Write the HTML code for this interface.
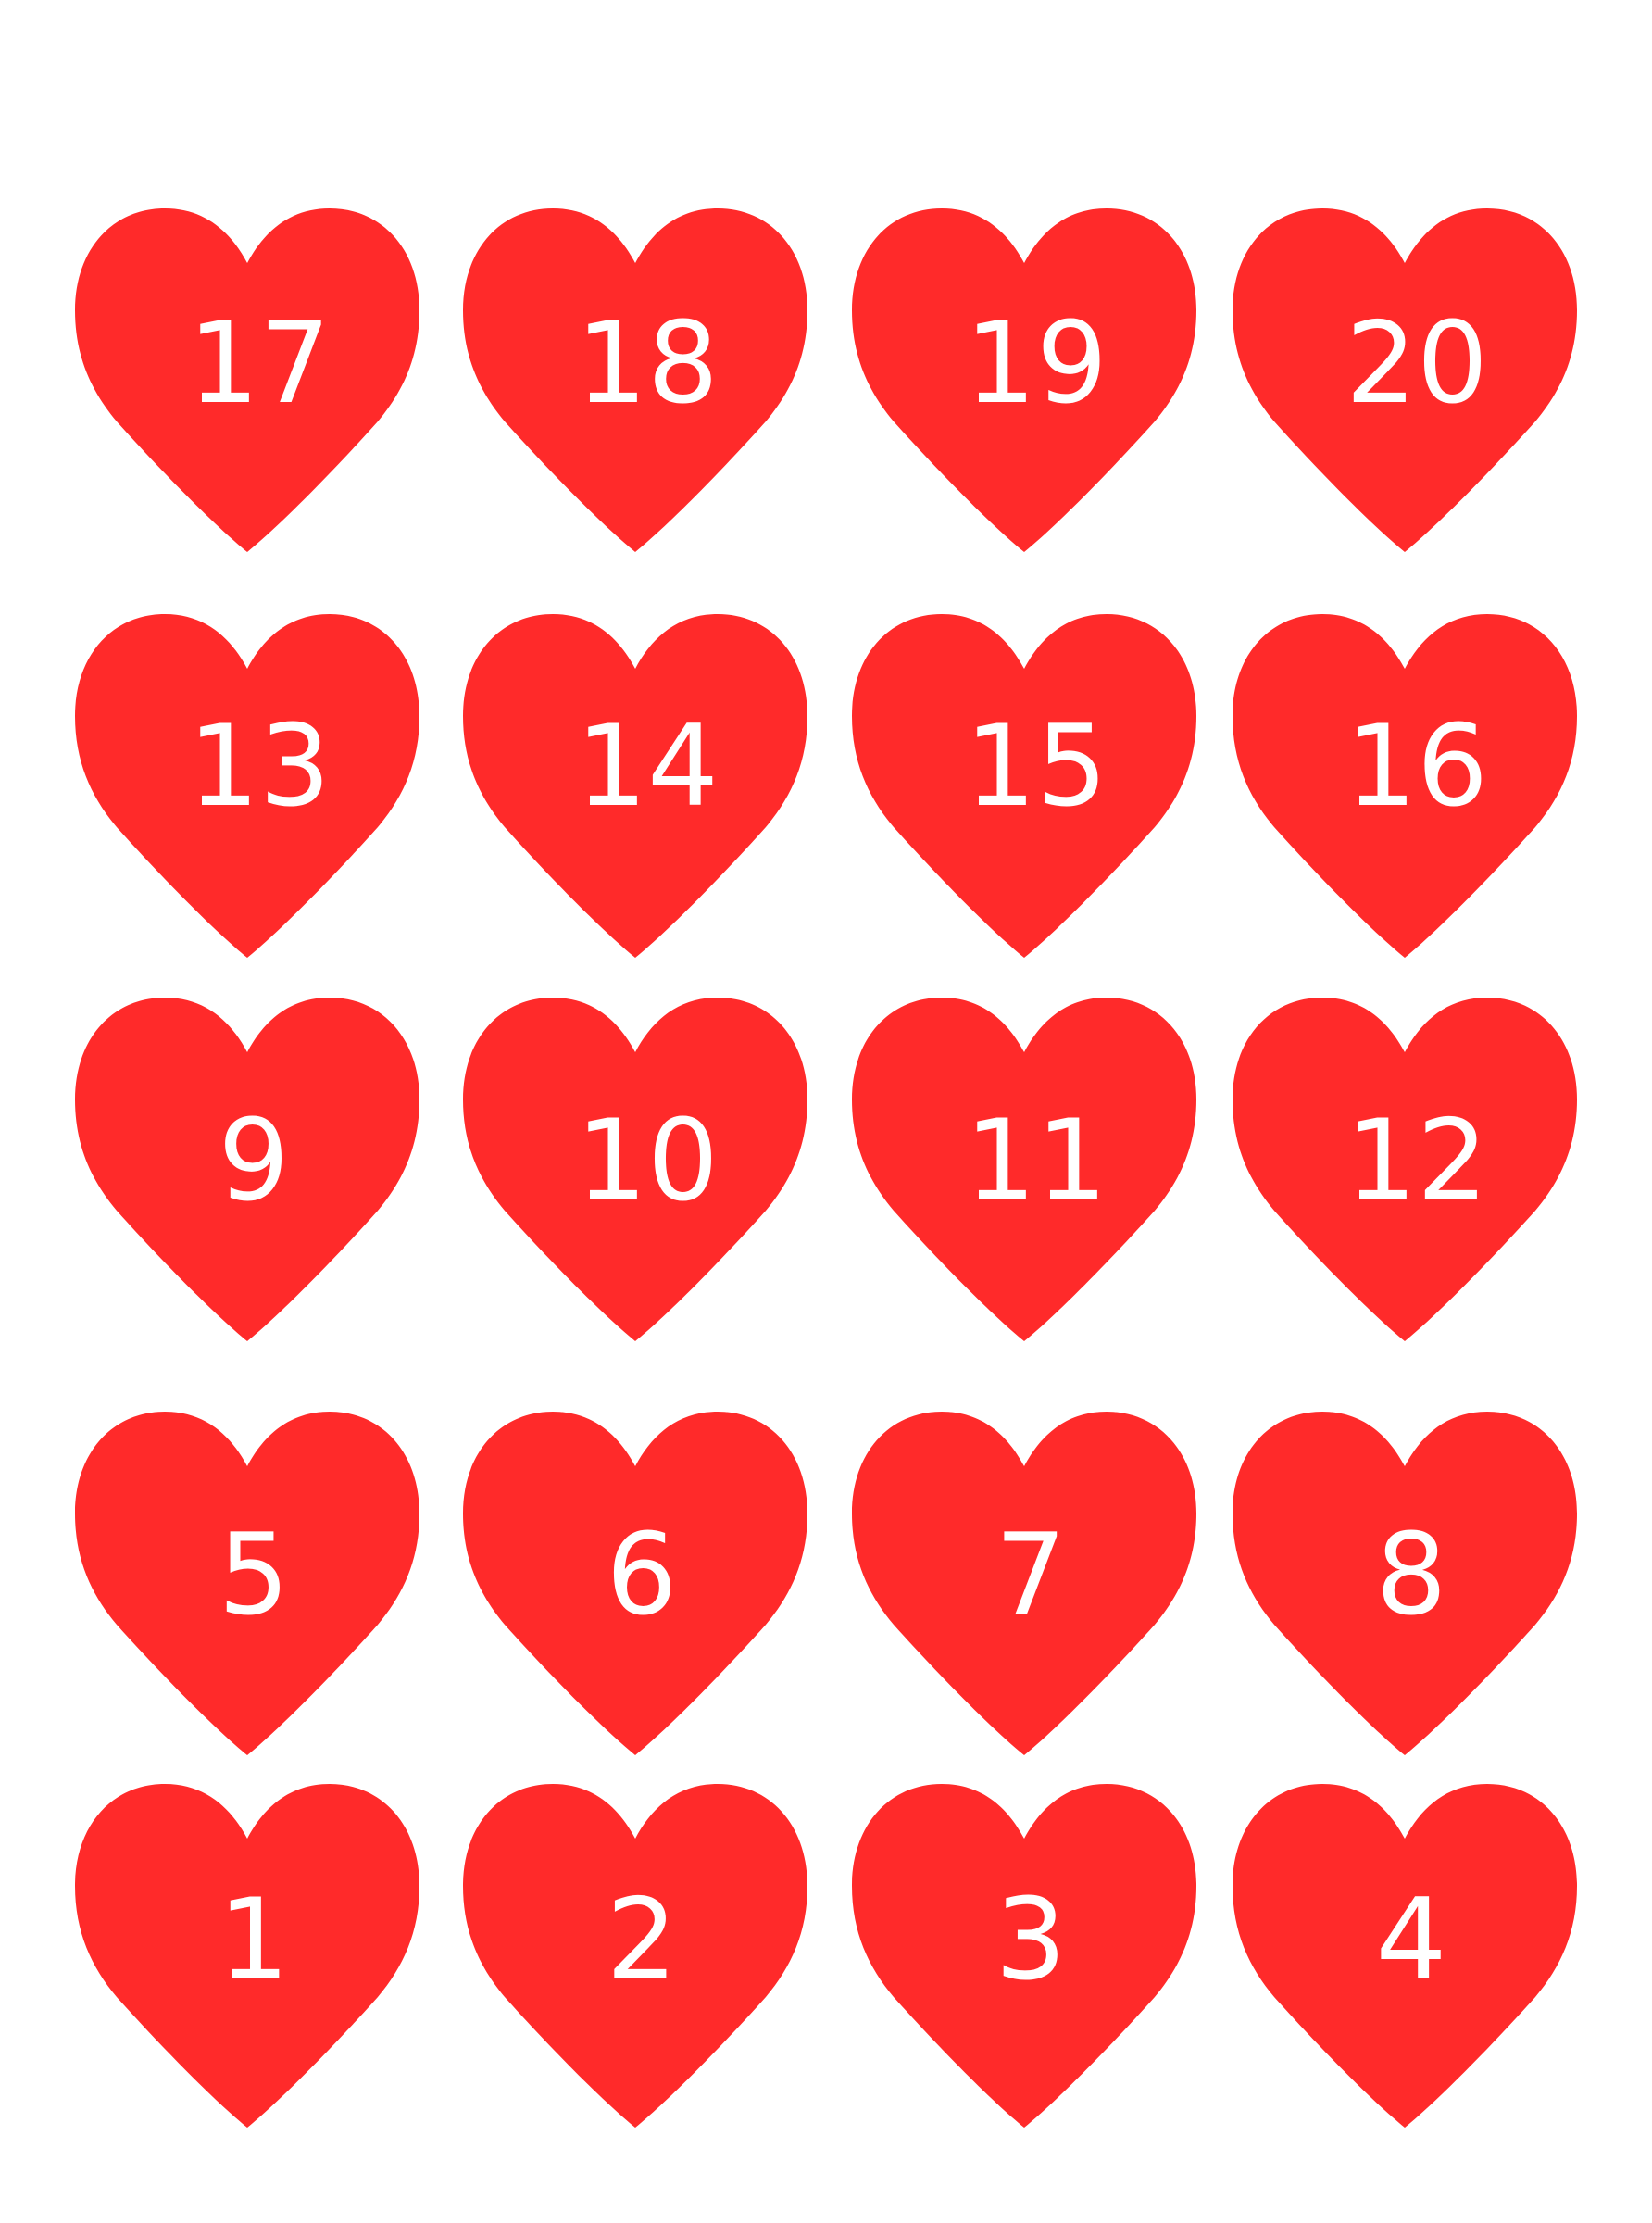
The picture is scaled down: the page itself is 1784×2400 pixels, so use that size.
<!DOCTYPE html>
<html><head><meta charset="utf-8"><style>
html,body{margin:0;padding:0;background:#fff;}
body{width:1784px;height:2400px;position:relative;overflow:hidden;}
svg.h{position:absolute;}
svg.h text{fill:#fff;font-family:"DejaVu Sans",sans-serif;font-size:121px;}
</style></head><body>
<svg width="0" height="0" style="position:absolute"><defs><path id="hp" d="M186,59 C168,25 140,0 97,0 C40,0 0,45 0,110 C0,160 18,198 45,230 C88,278 148,340 186,371 C224,340 284,278 327,230 C354,198 372,160 372,110 C372,45 332,0 275,0 C232,0 204,25 186,59 Z"/></defs></svg>
<script>
const cols=[267,686,1106,1517];
const tops=[225,663,1077,1524,1926];
const base=[434,869,1295,1742,2136];
const nums=[[17,18,19,20],[13,14,15,16],[9,10,11,12],[5,6,7,8],[1,2,3,4]];
let html='';
for(let r=0;r<5;r++)for(let c=0;c<4;c++){
 const l=cols[c]-186,t=tops[r];
 const by=base[r]-t;
 const n=nums[r][c];
 const x=n>=10?199:193;
 html+=`<svg class="h" style="left:${l}px;top:${t}px" width="372" height="371" viewBox="0 0 372 371"><use href="#hp" fill="#ff2a2a"/><text x="${x}" y="${by}" text-anchor="middle">${n}</text></svg>`;
}
document.body.insertAdjacentHTML('beforeend',html);
</script>
</body></html>
